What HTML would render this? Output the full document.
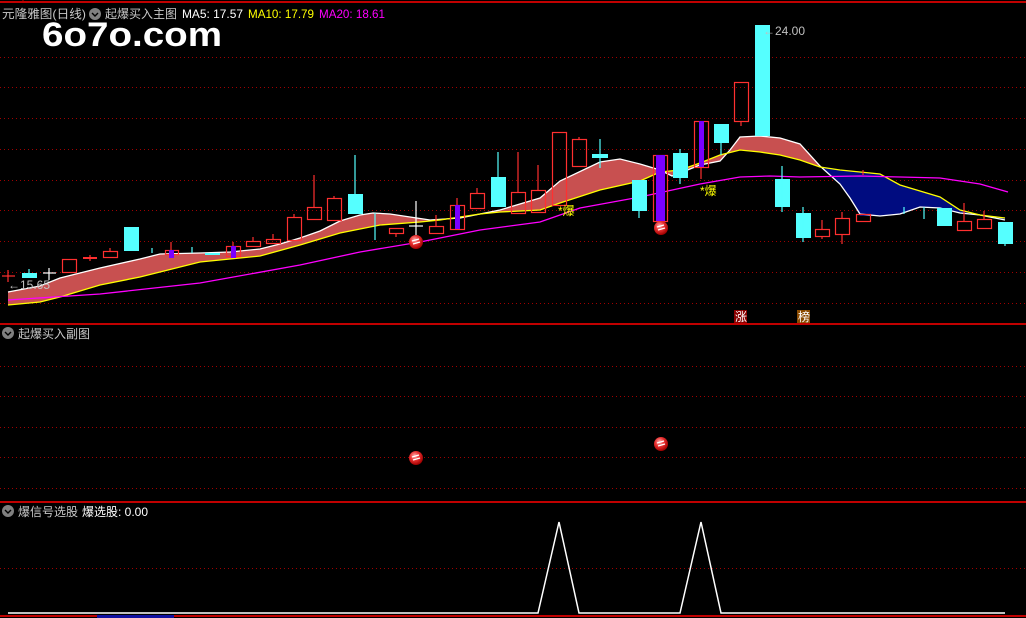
<!DOCTYPE html>
<html><head><meta charset="utf-8"><style>
html,body{margin:0;padding:0;background:#000;width:1026px;height:618px;overflow:hidden}
svg{display:block}
text{font-family:"Liberation Sans","Noto Sans CJK SC",sans-serif}
</style></head><body>
<svg width="1026" height="618" viewBox="0 0 1026 618" xmlns="http://www.w3.org/2000/svg">
<rect width="1026" height="618" fill="#000"/>
<g stroke="#a00000" stroke-width="1" stroke-dasharray="1 3">
<line x1="0" y1="57.5" x2="1026" y2="57.5"/><line x1="0" y1="87.5" x2="1026" y2="87.5"/><line x1="0" y1="118.5" x2="1026" y2="118.5"/><line x1="0" y1="149.5" x2="1026" y2="149.5"/><line x1="0" y1="180.5" x2="1026" y2="180.5"/><line x1="0" y1="210.5" x2="1026" y2="210.5"/><line x1="0" y1="241.5" x2="1026" y2="241.5"/><line x1="0" y1="272.5" x2="1026" y2="272.5"/><line x1="0" y1="303.5" x2="1026" y2="303.5"/>
<line x1="0" y1="366.5" x2="1026" y2="366.5"/><line x1="0" y1="396.5" x2="1026" y2="396.5"/><line x1="0" y1="427.5" x2="1026" y2="427.5"/><line x1="0" y1="457.5" x2="1026" y2="457.5"/><line x1="0" y1="488.5" x2="1026" y2="488.5"/>
<line x1="0" y1="568.5" x2="1026" y2="568.5"/>
</g>
<g stroke="#c00000" stroke-width="2">
<line x1="0" y1="2" x2="1026" y2="2"/><line x1="0" y1="324" x2="1026" y2="324"/><line x1="0" y1="502" x2="1026" y2="502"/><line x1="0" y1="616" x2="1026" y2="616"/>
</g>
<line x1="23" y1="0" x2="23" y2="2" stroke="#c00000"/>
<rect x="97" y="615" width="77" height="3" fill="#1010a0"/>

<polygon fill="#c85050" points="8,292 40,286 60,278 100,268 140,259 160,254 200,253 230,252 260,249 280,244 300,238 320,231 340,221 360,215 373,213 390,214 410,217 430,220 460,218 500,210 540,198 560,181 600,162 620,159 640,164 660,170 672,176 680,173 700,165 720,161 730,150 740,137 760,136 780,138 800,144 820,166 820,167 800,160 780,155 760,152 740,150 720,155 700,163 680,170 660,172 640,181 600,190 560,203 540,210 500,212 480,214 440,220 420,222 380,225 340,233 300,245 260,256 200,262 140,277 100,285 60,297 40,302 8,305"/>
<polygon fill="#000c80" points="820,167 840,170 860,172 880,174 900,185 920,191 940,197 960,210 980,215 1005,218 1005,220 980,215 960,213 940,208 920,207 900,214 880,216 860,216 850,198 840,184 820,166"/>
<polyline fill="none" stroke="#fff" stroke-width="1.3" points="8,292 40,286 60,278 100,268 140,259 160,254 200,253 230,252 260,249 280,244 300,238 320,231 340,221 360,215 373,213 390,214 410,217 430,220 460,218 500,210 540,198 560,181 600,162 620,159 640,164 660,170 672,176 680,173 700,165 720,161 730,150 740,137 760,136 780,138 800,144 820,166 840,184 850,198 860,214 880,216 900,214 920,207 940,208 960,213 980,215 1005,220"/>
<polyline fill="none" stroke="#ffff00" stroke-width="1.3" points="8,305 40,302 60,297 100,285 140,277 200,262 260,256 300,245 340,233 380,225 420,222 440,220 480,214 500,212 540,210 560,203 600,190 640,181 660,172 680,170 700,163 720,155 740,150 760,152 780,155 800,160 820,167 840,170 860,172 880,174 900,185 920,191 940,197 960,210 980,215 1005,218"/>
<polyline fill="none" stroke="#ff00ff" stroke-width="1.3" points="8,300 100,294 200,283 300,265 360,252 420,242 480,230 540,222 580,208 640,197 700,184 740,177 770,176 800,177 860,176 900,177 940,178 980,184 1008,192"/>

<g stroke-width="1.2">
<g stroke="#ff3030" fill="none">
<line x1="2" y1="276" x2="15" y2="276"/><line x1="8" y1="270" x2="8" y2="282"/>
<rect x="62.5" y="259.5" width="14" height="13"/>
<line x1="83" y1="258" x2="97" y2="258" stroke-width="2"/><line x1="90" y1="255" x2="90" y2="261"/>
<rect x="103.5" y="251.5" width="14" height="6"/><line x1="110" y1="248" x2="110" y2="251"/>
<rect x="165.5" y="250.5" width="13" height="4"/><line x1="171" y1="242" x2="171" y2="250"/>
<rect x="226.5" y="246.5" width="14" height="10"/><line x1="233" y1="242" x2="233" y2="246"/>
<rect x="246.5" y="241.5" width="14" height="5"/><line x1="253" y1="237" x2="253" y2="241"/>
<rect x="266.5" y="239.5" width="14" height="4"/><line x1="273" y1="234" x2="273" y2="239"/>
<rect x="287.5" y="217.5" width="14" height="23"/><line x1="294" y1="214" x2="294" y2="217"/>
<rect x="307.5" y="207.5" width="14" height="12"/><line x1="314" y1="175" x2="314" y2="207"/>
<rect x="327.5" y="198.5" width="14" height="22"/><line x1="334" y1="196" x2="334" y2="198"/>
<rect x="389.5" y="228.5" width="14" height="5"/><line x1="396" y1="233" x2="396" y2="237"/>
<rect x="429.5" y="226.5" width="14" height="7"/><line x1="436" y1="215" x2="436" y2="226"/>
<rect x="450.5" y="205.5" width="14" height="24"/><line x1="457" y1="198" x2="457" y2="205"/>
<rect x="470.5" y="193.5" width="14" height="15"/><line x1="477" y1="188" x2="477" y2="193"/>
<rect x="511.5" y="192.5" width="14" height="21"/><line x1="518" y1="152" x2="518" y2="192"/>
<rect x="531.5" y="190.5" width="14" height="22"/><line x1="538" y1="165" x2="538" y2="190"/>
<rect x="552.5" y="132.5" width="14" height="73"/>
<rect x="572.5" y="139.5" width="14" height="27"/><line x1="579" y1="137" x2="579" y2="139"/>
<rect x="653.5" y="155.5" width="14" height="66"/>
<rect x="694.5" y="121.5" width="14" height="46"/><line x1="701" y1="167" x2="701" y2="179"/>
<rect x="734.5" y="82.5" width="14" height="39"/><line x1="741" y1="121" x2="741" y2="126"/>
<rect x="815.5" y="229.5" width="14" height="7"/><line x1="822" y1="220" x2="822" y2="229"/><line x1="822" y1="236" x2="822" y2="239"/>
<rect x="835.5" y="218.5" width="14" height="16"/><line x1="842" y1="212" x2="842" y2="218"/><line x1="842" y1="234" x2="842" y2="244"/>
<rect x="856.5" y="214.5" width="14" height="7"/><line x1="863" y1="170" x2="863" y2="175"/>
<rect x="957.5" y="221.5" width="14" height="9"/><line x1="964" y1="203" x2="964" y2="221"/>
<rect x="977.5" y="219.5" width="14" height="9"/><line x1="984" y1="211" x2="984" y2="219"/>
</g>
<g fill="#7a00ff">
<rect x="169" y="250" width="5" height="8"/><rect x="231" y="246" width="5" height="12"/><rect x="455" y="205" width="5" height="24"/>
<rect x="656" y="155" width="9" height="66"/><rect x="699" y="121" width="5" height="46"/>
</g>
<g fill="#55ffff" stroke="#55ffff">
<rect x="22" y="273" width="15" height="5" stroke="none"/><line x1="29" y1="269" x2="29" y2="273"/>
<rect x="124" y="227" width="15" height="24" stroke="none"/>
<line x1="152" y1="248" x2="152" y2="253"/><line x1="192" y1="247" x2="192" y2="253"/>
<rect x="205" y="253" width="15" height="2" stroke="none"/>
<rect x="348" y="194" width="15" height="20" stroke="none"/><line x1="355" y1="155" x2="355" y2="194"/>
<line x1="375" y1="213" x2="375" y2="240"/>
<rect x="491" y="177" width="15" height="30" stroke="none"/><line x1="498" y1="152" x2="498" y2="177"/>
<rect x="592" y="154" width="16" height="4" stroke="none"/><line x1="600" y1="139" x2="600" y2="168"/>
<rect x="632" y="180" width="15" height="31" stroke="none"/><line x1="639" y1="211" x2="639" y2="218"/>
<rect x="673" y="153" width="15" height="25" stroke="none"/><line x1="680" y1="149" x2="680" y2="184"/>
<rect x="714" y="124" width="15" height="19" stroke="none"/><line x1="721" y1="143" x2="721" y2="155"/>
<rect x="755" y="25" width="15" height="111" stroke="none"/>
<rect x="775" y="179" width="15" height="28" stroke="none"/><line x1="782" y1="166" x2="782" y2="212"/>
<rect x="796" y="213" width="15" height="25" stroke="none"/><line x1="803" y1="207" x2="803" y2="242"/>
<line x1="904" y1="207" x2="904" y2="214"/><line x1="924" y1="207" x2="924" y2="219"/>
<rect x="937" y="208" width="15" height="18" stroke="none"/>
<rect x="998" y="222" width="15" height="22" stroke="none"/><line x1="1005" y1="244" x2="1005" y2="246"/>
</g>
<g stroke="#fff">
<line x1="43" y1="273" x2="56" y2="273"/><line x1="49" y1="268" x2="49" y2="280"/>
<line x1="409" y1="226" x2="423" y2="226"/><line x1="416" y1="201" x2="416" y2="235"/>
</g>
</g>

<defs><radialGradient id="b" cx="40%" cy="35%" r="65%"><stop offset="0" stop-color="#ffb0b0"/><stop offset=".5" stop-color="#e83030"/><stop offset="1" stop-color="#a00000"/></radialGradient></defs>
<g fill="url(#b)"><circle cx="416" cy="242" r="7"/><circle cx="661" cy="228" r="7"/><circle cx="416" cy="458" r="7"/><circle cx="661" cy="444" r="7"/></g>
<g stroke="#fff" stroke-width="1.2" fill="none"><path d="M412 241 l7 -2 M413 244 l7 -2"/><path d="M657 227 l7 -2 M658 230 l7 -2"/><path d="M412 457 l7 -2 M413 460 l7 -2"/><path d="M657 443 l7 -2 M658 446 l7 -2"/></g>

<g font-size="12">
<text x="558" y="215" fill="#ffff00">*爆</text>
<text x="700" y="195" fill="#ffff00">*爆</text>
<text x="8" y="289" fill="#c0c0c0">←15.65</text>
<text x="763" y="35" fill="#c0c0c0">←24.00</text>
</g>
<rect x="734" y="310" width="13" height="13" fill="#8a0000"/><text x="735" y="321" font-size="12" fill="#fff">涨</text>
<rect x="797" y="310" width="13" height="13" fill="#8a4a00"/><text x="798" y="321" font-size="12" fill="#fff">榜</text>

<g font-size="12">
<text x="2" y="18" fill="#c8c8c8" textLength="84" lengthAdjust="spacingAndGlyphs">元隆雅图(日线)</text>
<circle cx="95" cy="14" r="6" fill="#808080"/><path d="M92 13 l3 3 l3 -3" stroke="#000" stroke-width="1.4" fill="none"/>
<text x="105" y="18" fill="#c8c8c8">起爆买入主图</text>
<text x="182" y="18" fill="#fff" textLength="61" lengthAdjust="spacingAndGlyphs">MA5: 17.57</text>
<text x="248" y="18" fill="#ffff00" textLength="66" lengthAdjust="spacingAndGlyphs">MA10: 17.79</text>
<text x="319" y="18" fill="#ff00ff" textLength="66" lengthAdjust="spacingAndGlyphs">MA20: 18.61</text>
<circle cx="8" cy="333" r="6" fill="#808080"/><path d="M5 332 l3 3 l3 -3" stroke="#000" stroke-width="1.4" fill="none"/>
<text x="18" y="338" fill="#c8c8c8">起爆买入副图</text>
<circle cx="8" cy="511" r="6" fill="#808080"/><path d="M5 510 l3 3 l3 -3" stroke="#000" stroke-width="1.4" fill="none"/>
<text x="18" y="516" fill="#c8c8c8">爆信号选股</text>
<text x="82" y="516" fill="#fff">爆选股: 0.00</text>
</g>
<text x="42" y="46" font-size="34" font-weight="bold" fill="#fff" textLength="180" lengthAdjust="spacingAndGlyphs">6o7o.com</text>

<polyline fill="none" stroke="#fff" stroke-width="1.5" points="8,613 538,613 559,522 579,613 680,613 701,522 721,613 1005,613"/>
</svg>
</body></html>
